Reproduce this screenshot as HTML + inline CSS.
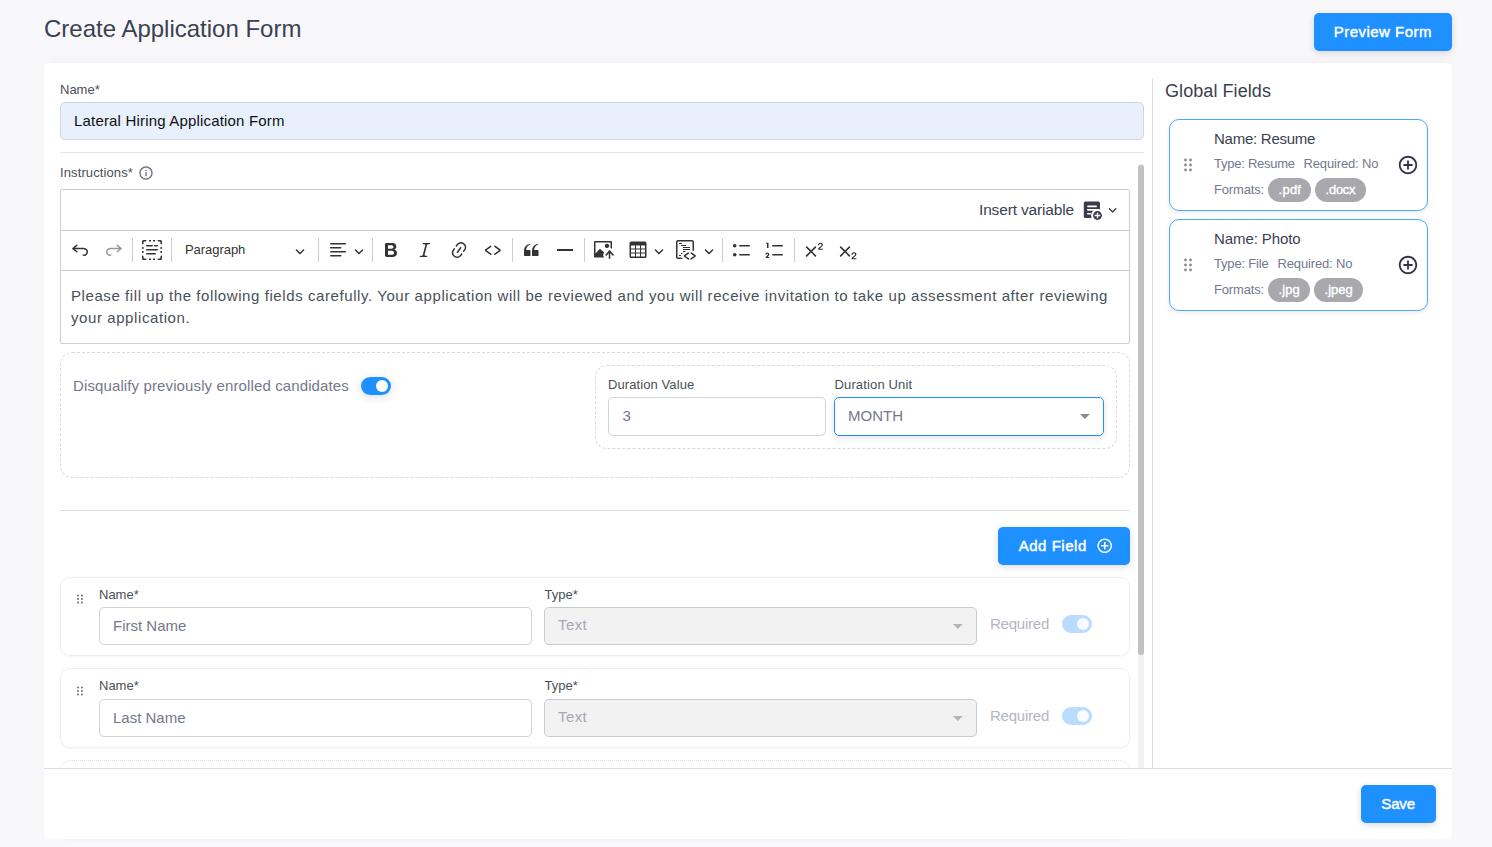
<!DOCTYPE html>
<html lang="en">
<head>
<meta charset="utf-8">
<title>Create Application Form</title>
<style>
*{box-sizing:border-box;margin:0;padding:0}
html,body{width:1492px;height:847px;overflow:hidden}
body{background:#f8f8fb;font-family:"Liberation Sans",sans-serif;position:relative;color:#495057}
.abs{position:absolute}
/* text positioned by left (--x), baseline (--b) and font-size (--fs) */
.t{position:absolute;white-space:nowrap;line-height:1;left:calc(var(--x)*1px);top:calc(var(--b)*1px - var(--fs)*0.8465px);font-size:calc(var(--fs)*1px);letter-spacing:calc(var(--ls,0)*1px)}
.card{left:44px;top:63px;width:1408px;height:776px;background:#fff;border-radius:5px;box-shadow:0 -6px 10px -4px rgba(18,38,63,.035)}
.btn{background:#1e90ff;border-radius:5px;box-shadow:0 2px 6px rgba(40,40,60,.17)}
.sb{-webkit-text-stroke:0.45px currentColor}
.inp{background:#fff;border:1px solid #ced4da;border-radius:5px}
.hr{height:1px;background:#e4e6ea}
.lbl{color:#495057}
.muted{color:#74788d}
.dash{border:1px dashed #d9d9dd;border-radius:12px}
.dot{border:1px dotted #dedede;border-radius:10px;box-shadow:0 1px 3px rgba(0,0,0,.04)}
.sel-dis{background:#f2f2f2;border:1px solid #c9c9d0;border-radius:5px}
.tog{border-radius:9px}
.tog i{position:absolute;border-radius:50%;background:#fff}
.gcard{border:1px solid #4da6ff;border-radius:10px;background:#fff;box-shadow:0 2px 4px rgba(0,0,0,.08)}
.badge{background:#a8a8ad;border-radius:12px;height:24px}
.badge .t{color:#fff;-webkit-text-stroke:0.4px #fff}
svg{position:absolute;display:block;overflow:visible}
.ck{fill:#333}
.sep{width:1px;height:24px;top:238px;background:#ccced1}
</style>
</head>
<body>

<!-- page header -->
<h4 class="t" style="--x:44;--b:37;--fs:24;font-weight:400;color:#3b4152">Create Application Form</h4>
<div class="abs btn" style="left:1314px;top:13px;width:138px;height:38px"></div>
<span class="t sb" style="--x:1333.7;--b:37;--fs:15;--ls:0.48;color:#fff">Preview Form</span>

<!-- main card -->
<div class="abs card"></div>

<!-- name -->
<label class="t lbl" style="--x:60;--b:94;--fs:13">Name*</label>
<div class="abs inp" style="left:60px;top:102px;width:1084px;height:38px;background:#e8f0fe"></div>
<span class="t" style="--x:74;--b:126;--fs:15;--ls:0.18;color:#101010">Lateral Hiring Application Form</span>
<div class="abs hr" style="left:60px;top:152px;width:1084px"></div>

<!-- instructions -->
<label class="t lbl" style="--x:60;--b:177;--fs:13;--ls:0.11">Instructions*</label>
<svg style="left:137.8px;top:165.2px" width="16" height="16" viewBox="0 0 24 24" fill="#6c6e82"><path d="M12 2C6.486 2 2 6.486 2 12s4.486 10 10 10 10-4.486 10-10S17.514 2 12 2zm0 18c-4.411 0-8-3.589-8-8s3.589-8 8-8 8 3.589 8 8-3.589 8-8 8z"/><path d="M11 11h2v6h-2zm0-4h2v2h-2z"/></svg>

<!-- editor -->
<div class="abs" style="left:60px;top:189px;width:1070px;height:155px;border:1px solid #ccced1;border-radius:2px;background:#fff"></div>
<div class="abs" style="left:60px;top:230px;width:1070px;height:1px;background:#ccced1"></div>
<div class="abs" style="left:60px;top:270px;width:1070px;height:1px;background:#ccced1"></div>

<!-- insert variable -->
<span class="t" style="--x:979;--b:215.4;--fs:15.5;--ls:-0.16;color:#3b4152">Insert variable</span>
<svg style="left:1082px;top:200px" width="20" height="20" viewBox="0 0 20 20"><rect x="1.800" y="1.600" width="16.200" height="16.400" rx="1.600" fill="#3a3a4a"/><path stroke="#fff" stroke-width="1.600" stroke-linecap="round" d="M5.850 6.350h8.400M5.750 9.850h11M5.750 13.700h2.600"/><circle cx="15.500" cy="15.500" r="6.500" fill="#fff"/><circle cx="15.500" cy="15.500" r="4.400" fill="#3a3a4a"/><path stroke="#fff" stroke-width="1.300" d="M15.500 12.700v5.600M12.700 15.500h5.600"/></svg>
<svg style="left:1107.5px;top:205px" width="9.2" height="9.2" viewBox="0 0 10 10" fill="#3a3a4a"><path d="M.941 4.523a.75.75 0 1 1 1.060-1.060l3.006 3.005 3.005-3.005a.75.75 0 1 1 1.060 1.060l-3.549 3.550a.75.750 0 0 1-1.168-.136L.941 4.523z"/></svg>

<!-- toolbar -->
<svg class="ck" style="left:70px;top:240px" width="20" height="20" viewBox="0 0 20 20"><path d="m5.042 9.367 2.189 1.837a.75.75 0 0 1-.965 1.149l-3.788-3.180a.747.747 0 0 1-.210-.284.75.75 0 0 1 .170-.945L6.230 4.762a.75.75 0 1 1 .964 1.150L4.863 7.866h8.917A.75.75 0 0 1 14 7.900a4 4 0 1 1-1.477 7.718l.344-1.489a2.500 2.500 0 1 0 1.094-4.730l.008-.032H5.042z"/></svg>
<svg class="ck" style="left:104px;top:240px;opacity:.5" width="20" height="20" viewBox="0 0 20 20"><path d="m14.958 9.367-2.189 1.837a.75.75 0 0 0 .965 1.149l3.788-3.180a.747.747 0 0 0 .210-.284.75.75 0 0 0-.170-.945L13.770 4.762a.75.75 0 1 0-.964 1.150l2.331 1.955H6.220A.75.75 0 0 0 6 7.900a4 4 0 1 0 1.477 7.718l-.344-1.489A2.500 2.500 0 1 1 6.039 9.400l-.008-.032h8.927z"/></svg>
<div class="abs sep" style="left:132px"></div>
<svg class="ck" style="left:142px;top:240px" width="20" height="20" viewBox="0 0 20 20"><path d="M.75 15.500a.75.75 0 0 1 .75.75V18l.008.090A.500.500 0 0 0 2 18.500h1.750a.75.75 0 1 1 0 1.500H1.500l-.144-.007a1.500 1.500 0 0 1-1.350-1.349L0 18.500v-2.250a.75.75 0 0 1 .75-.75zm18.500 0a.75.75 0 0 1 .75.75v2.250l-.007.144a1.500 1.500 0 0 1-1.349 1.350L18.500 20h-2.250a.75.75 0 1 1 0-1.500H18a.500.500 0 0 0 .492-.410L18.500 18v-1.750a.75.75 0 0 1 .75-.75zm-10.450 3c.110 0 .200.090.200.200v1.100a.200.200 0 0 1-.200.200H7.200a.200.200 0 0 1-.200-.200v-1.100c0-.110.090-.200.200-.200h1.600zm4 0c.110 0 .200.090.200.200v1.100a.200.200 0 0 1-.200.200h-1.600a.200.200 0 0 1-.200-.200v-1.100c0-.110.090-.200.200-.200h1.600zm.450-5.500a.75.75 0 1 1 0 1.500h-8.500a.75.75 0 1 1 0-1.500h8.500zM1.300 11c.110 0 .200.090.200.200v1.600a.200.200 0 0 1-.200.200H.200a.200.200 0 0 1-.200-.200v-1.600c0-.110.090-.200.200-.200h1.100zm18.500 0c.110 0 .200.090.200.200v1.600a.200.200 0 0 1-.200.200h-1.100a.200.200 0 0 1-.200-.200v-1.600c0-.110.090-.200.200-.200h1.100zm-4.550-2a.75.75 0 1 1 0 1.500H4.750a.75.75 0 1 1 0-1.500h10.500zM1.300 7c.110 0 .200.090.200.200v1.600a.200.200 0 0 1-.200.200H.200a.200.200 0 0 1-.200-.200V7.200c0-.110.090-.200.200-.200h1.100zm18.500 0c.110 0 .200.090.200.200v1.600a.200.200 0 0 1-.200.200h-1.100a.200.200 0 0 1-.200-.200V7.200c0-.110.090-.200.200-.200h1.100zm-4.550-2a.75.75 0 1 1 0 1.500h-2.500a.75.75 0 1 1 0-1.500h2.500zm-5 0a.75.75 0 1 1 0 1.500h-5.500a.75.75 0 0 1 0-1.500h5.500zm-6.500-5a.75.75 0 0 1 0 1.500H2a.500.500 0 0 0-.492.410L1.500 2v1.750a.75.75 0 0 1-1.500 0V1.500l.007-.144A1.500 1.500 0 0 1 1.356.006L1.500 0h2.250zM18.500 0l.144.007a1.500 1.500 0 0 1 1.350 1.349L20 1.500v2.250a.75.75 0 1 1-1.500 0V2l-.008-.090A.500.500 0 0 0 18 1.500h-1.750a.75.75 0 1 1 0-1.500h2.250zM8.800 0c.110 0 .200.090.200.200v1.100a.200.200 0 0 1-.200.200H7.200a.200.200 0 0 1-.200-.200V.200c0-.110.090-.200.200-.200h1.600zm4 0c.110 0 .200.090.200.200v1.100a.200.200 0 0 1-.200.200h-1.600a.200.200 0 0 1-.200-.200V.200c0-.110.090-.200.200-.200h1.600z"/></svg>
<div class="abs sep" style="left:171px"></div>
<span class="t" style="--x:185;--b:254;--fs:13;--ls:-0.05;color:#333">Paragraph</span>
<svg class="ck" style="left:295px;top:246px" width="10" height="10" viewBox="0 0 10 10"><path d="M.941 4.523a.75.75 0 1 1 1.060-1.060l3.006 3.005 3.005-3.005a.75.75 0 1 1 1.060 1.060l-3.549 3.550a.75.750 0 0 1-1.168-.136L.941 4.523z"/></svg>
<div class="abs sep" style="left:318px"></div>
<svg class="ck" style="left:328px;top:240px" width="20" height="20" viewBox="0 0 20 20"><path d="M2 3.750c0 .414.336.75.75.75h14.500a.75.75 0 1 0 0-1.500H2.750a.75.75 0 0 0-.75.75zm0 8c0 .414.336.75.75.75h14.500a.75.75 0 1 0 0-1.500H2.750a.75.75 0 0 0-.75.75zm0 4c0 .414.336.75.75.75h9.929a.75.75 0 1 0 0-1.500H2.750a.75.75 0 0 0-.75.75zm0-8c0 .414.336.75.75.75h9.929a.75.75 0 1 0 0-1.500H2.750a.75.75 0 0 0-.75.75z"/></svg>
<svg class="ck" style="left:354px;top:246px" width="10" height="10" viewBox="0 0 10 10"><path d="M.941 4.523a.75.75 0 1 1 1.060-1.060l3.006 3.005 3.005-3.005a.75.75 0 1 1 1.060 1.060l-3.549 3.550a.75.750 0 0 1-1.168-.136L.941 4.523z"/></svg>
<div class="abs sep" style="left:372px"></div>
<svg class="ck" style="left:381px;top:240px" width="20" height="20" viewBox="0 0 20 20"><path d="M10.187 17H5.773c-.637 0-1.092-.138-1.364-.415-.273-.277-.409-.718-.409-1.323V4.738c0-.617.140-1.062.419-1.332.279-.270.730-.406 1.354-.406h4.680c.690 0 1.288.041 1.793.124.506.083.960.242 1.360.478.341.197.644.447.906.75a3.262 3.262 0 0 1 .808 2.162c0 1.401-.722 2.426-2.167 3.075C15.050 10.175 16 11.315 16 13.010a3.756 3.756 0 0 1-2.296 3.504 6.100 6.100 0 0 1-1.517.377c-.571.073-1.238.110-2 .110zm-.217-6.217H7v4.087h3.069c1.977 0 2.965-.690 2.965-2.072 0-.707-.256-1.220-.768-1.537-.512-.319-1.277-.478-2.296-.478zM7 5.130v3.619h2.606c.729 0 1.292-.067 1.690-.200a1.600 1.600 0 0 0 .910-.765c.165-.267.247-.566.247-.897 0-.707-.260-1.176-.778-1.409-.519-.232-1.310-.348-2.375-.348H7z"/></svg>
<svg class="ck" style="left:415px;top:240px" width="20" height="20" viewBox="0 0 20 20"><path d="m9.586 14.633.021.004c-.036.335.095.655.393.962.082.083.173.150.274.201h1.474a.600.600 0 1 1 0 1.200H5.304a.600.600 0 0 1 0-1.200h1.150c.474-.070.809-.182 1.005-.334.157-.122.291-.320.404-.597l2.416-9.550a1.053 1.053 0 0 0-.281-.823 1.120 1.120 0 0 0-.442-.296H8.150a.600.600 0 0 1 0-1.200h6.443a.600.600 0 1 1 0 1.200h-1.195c-.376.056-.650.155-.823.296-.215.175-.423.439-.623.790l-2.366 9.347z"/></svg>
<svg class="ck" style="left:449px;top:240px" width="20" height="20" viewBox="0 0 20 20"><path d="m11.077 15 .991-1.416a.75.75 0 1 1 1.229.860l-1.148 1.640a.748.748 0 0 1-.217.206 5.251 5.251 0 0 1-8.503-5.955.741.741 0 0 1 .120-.274l1.147-1.639a.75.75 0 1 1 1.228.860L4.933 10.700l.006.003a3.750 3.750 0 0 0 6.132 4.294l.006.004zm5.494-5.335a.748.748 0 0 1-.120.274l-1.147 1.639a.75.75 0 1 1-1.228-.860l.860-1.230a3.750 3.750 0 0 0-6.144-4.301l-.860 1.229a.75.75 0 0 1-1.229-.860l1.148-1.640a.748.748 0 0 1 .217-.206 5.251 5.251 0 0 1 8.503 5.955zm-4.563-2.532a.75.75 0 0 1 .184 1.045l-3.155 4.505a.75.75 0 1 1-1.229-.860l3.155-4.506a.75.75 0 0 1 1.045-.184z"/></svg>
<svg class="ck" style="left:483px;top:240px" width="20" height="20" viewBox="0 0 20 20"><path d="m12.500 5.700 5.200 3.900v1.300l-5.600 4c-.100.200-.300.200-.500.200-.300-.100-.600-.700-.600-1l.300-.400 4.700-3.500L11.500 7l-.200-.200c-.100-.300-.100-.600 0-.800.200-.200.500-.400.800-.400a.800.800 0 0 1 .400.100zm-5.200 0L2 9.600v1.300l5.600 4c.100.200.300.200.500.200.300-.100.700-.700.600-1 0-.100 0-.300-.200-.400l-5-3.500L8.200 7l.200-.200c.100-.300.100-.600 0-.800-.200-.200-.500-.400-.800-.400a.800.800 0 0 0-.300.100z"/></svg>
<div class="abs sep" style="left:512px"></div>
<svg class="ck" style="left:521px;top:240px" width="20" height="20" viewBox="0 0 20 20"><path d="M3 10.423a6.500 6.500 0 0 1 6.056-6.408l.038.670C6.448 5.423 5.354 7.663 5.220 10H9c.552 0 .500.432.500.986v4.511c0 .554-.448.503-1 .503h-5c-.552 0-.500-.449-.500-1.003v-4.574zm8 0a6.500 6.500 0 0 1 6.056-6.408l.038.670c-2.646.739-3.740 2.979-3.873 5.315H17c.552 0 .500.432.500.986v4.511c0 .554-.448.503-1 .503h-5c-.552 0-.500-.449-.500-1.003v-4.574z"/></svg>
<svg class="ck" style="left:555px;top:240px" width="20" height="20" viewBox="0 0 20 20"><path d="M2 9h16v2H2z"/></svg>
<div class="abs sep" style="left:584px"></div>
<svg class="ck" style="left:594px;top:240px" width="20" height="20" viewBox="0 0 20 20"><path d="M1.201 1C.538 1 0 1.470 0 2.100v14.363c0 .640.534 1.037 1.186 1.037h9.494a2.970 2.970 0 0 1-.414-.287 2.998 2.998 0 0 1-1.055-2.030 3.003 3.003 0 0 1 .693-2.185l.383-.455-.020.018-3.650-3.410a.695.695 0 0 0-.957-.034L1.500 13.600V2.500h15v5.535a2.970 2.970 0 0 1 1.412.932l.088.105V2.100c0-.630-.547-1.100-1.200-1.100H1.202Zm11.713 2.803a2.146 2.146 0 0 0-2.049 1.992 2.140 2.140 0 0 0 1.280 2.096 2.130 2.130 0 0 0 2.644-3.110 2.134 2.134 0 0 0-1.875-.978Z"/><path d="M15.522 19.100a.790.790 0 0 0 .790-.790v-5.373l2.059 2.455a.790.790 0 1 0 1.211-1.015l-3.352-3.995a.790.790 0 0 0-.995-.179.784.784 0 0 0-.299.221l-3.350 3.990a.790.790 0 1 0 1.210 1.017l1.936-2.306v5.185c0 .436.353.790.790.790Z"/></svg>
<svg class="ck" style="left:628px;top:240px" width="20" height="20" viewBox="0 0 20 20"><path d="M3 5.500v3h4v-3H3Zm0 4v3h4v-3H3Zm0 4v3h4v-3H3Zm5 3h4v-3H8v3Zm5 0h4v-3h-4v3Zm4-4v-3h-4v3h4Zm0-4v-3h-4v3h4Zm1.500 8A1.500 1.500 0 0 1 17 18H3a1.500 1.500 0 0 1-1.500-1.500V3c.222-.863 1.068-1.500 2-1.500h13c.932 0 1.778.637 2 1.500v13.500Zm-6.500-4v-3H8v3h4Zm0-4v-3H8v3h4Z"/></svg>
<svg class="ck" style="left:654px;top:246px" width="10" height="10" viewBox="0 0 10 10"><path d="M.941 4.523a.75.75 0 1 1 1.060-1.060l3.006 3.005 3.005-3.005a.75.75 0 1 1 1.060 1.060l-3.549 3.550a.75.750 0 0 1-1.168-.136L.941 4.523z"/></svg>
<svg class="ck" style="left:676px;top:240px" width="20" height="20" viewBox="0 0 20 20"><path d="M12.870 12.610a.75.75 0 0 1-.089.976l-.085.070-3.154 2.254 3.412 2.414a.75.75 0 0 1 .237.950l-.057.095a.75.75 0 0 1-.950.237l-.096-.058-4.272-3.022-.003-1.223 4.010-2.867a.75.75 0 0 1 1.047.174zm2.795-.231.095.057 4.011 2.867-.003 1.223-4.272 3.022-.095.058a.75.75 0 0 1-.880-.151l-.070-.086-.058-.095a.75.75 0 0 1 .150-.880l.087-.070 3.412-2.414-3.154-2.253-.085-.071a.75.75 0 0 1 .862-1.207zM16 0a2 2 0 0 1 2 2v9.354l-.663-.492-.837-.001V2a.500.500 0 0 0-.500-.500H2a.500.500 0 0 0-.500.500v15a.500.500 0 0 0 .500.500h3.118L7.156 19H2a2 2 0 0 1-2-2V2a2 2 0 0 1 2-2h14zM5.009 15l.003 1H3v-1h2.009zm2.188-2-1.471 1H5v-1h2.197zM10 11v.095L8.668 12H7v-1h3zm4-2v1H7V9h7zm0-2v1H7V7h7zm-4-2v1H5V5h5zM6 3v1H3V3h3z"/></svg>
<svg class="ck" style="left:704px;top:246px" width="10" height="10" viewBox="0 0 10 10"><path d="M.941 4.523a.75.75 0 1 1 1.060-1.060l3.006 3.005 3.005-3.005a.75.75 0 1 1 1.060 1.060l-3.549 3.550a.75.750 0 0 1-1.168-.136L.941 4.523z"/></svg>
<div class="abs sep" style="left:722px"></div>
<svg class="ck" style="left:732px;top:240px" width="20" height="20" viewBox="0 0 20 20"><path d="M7 5.750c0 .414.336.75.75.75h9.500a.75.75 0 1 0 0-1.500h-9.500a.75.75 0 0 0-.75.75zm-6 0C1 4.784 1.777 4 2.750 4c.966 0 1.750.777 1.750 1.750 0 .966-.777 1.750-1.750 1.750C1.784 7.500 1 6.723 1 5.750zm6 9c0 .414.336.75.75.75h9.500a.75.75 0 1 0 0-1.500h-9.500a.75.75 0 0 0-.75.75zm-6 0c0-.966.777-1.750 1.750-1.750.966 0 1.750.777 1.750 1.750 0 .966-.777 1.750-1.750 1.750-.966 0-1.750-.777-1.750-1.750z"/></svg>
<svg class="ck" style="left:765px;top:240px" width="20" height="20" viewBox="0 0 20 20"><path d="M7 5.750c0 .414.336.75.75.75h9.500a.75.75 0 1 0 0-1.500h-9.500a.75.75 0 0 0-.75.75zM3.500 3v5H2V3.700H1v-1h2.500V3zM.343 17.857l2.590-3.257H2.920a.600.600 0 1 0-1.040 0H.302a2 2 0 1 1 3.995 0h-.001c-.048.405-.160.734-.333.988-.175.254-.590.692-1.244 1.312H4.300v1h-4l.043-.043zM7 14.750a.75.75 0 0 1 .75-.75h9.500a.75.75 0 1 1 0 1.500h-9.500a.75.75 0 0 1-.75-.75z"/></svg>
<div class="abs sep" style="left:794px"></div>
<svg class="ck" style="left:804px;top:240px" width="20" height="20" viewBox="0 0 20 20"><path d="M15.677 8.678h2.549c.254 0 .447.050.580.152a.490.490 0 0 1 .201.413.540.540 0 0 1-.159.393c-.105.108-.266.162-.480.162h-3.594c-.245 0-.435-.066-.572-.197a.621.621 0 0 1-.205-.463c0-.114.044-.265.132-.453a1.620 1.620 0 0 1 .288-.444c.433-.436.824-.810 1.172-1.122.348-.312.597-.517.747-.615.267-.183.490-.368.667-.553.177-.185.312-.375.405-.570.093-.194.139-.384.139-.570a1.008 1.008 0 0 0-.554-.917 1.197 1.197 0 0 0-.560-.133c-.426 0-.761.182-1.005.546a2.332 2.332 0 0 0-.164.390 1.609 1.609 0 0 1-.258.488c-.096.114-.237.170-.423.170a.558.558 0 0 1-.405-.156.568.568 0 0 1-.161-.427c0-.218.050-.446.151-.683.101-.238.252-.453.452-.646s.454-.349.762-.467a2.998 2.998 0 0 1 1.081-.178c.498 0 .923.076 1.274.228a1.916 1.916 0 0 1 1.004 1.032 1.984 1.984 0 0 1-.156 1.794c-.200.320-.405.572-.613.754-.208.182-.558.468-1.048.857-.490.390-.826.691-1.008.906a2.703 2.703 0 0 0-.240.309zM7.030 10.349l3.818-3.819a.800.800 0 1 1 1.132 1.132L8.160 11.480l3.819 3.818a.800.800 0 1 1-1.132 1.132L7.030 12.610l-3.818 3.820a.800.800 0 1 1-1.132-1.132L5.900 11.480 2.080 7.662A.800.800 0 1 1 3.212 6.530l3.818 3.820z"/></svg>
<svg class="ck" style="left:838px;top:240px" width="20" height="20" viewBox="0 0 20 20"><path d="m7.030 10.349 3.818-3.819a.800.800 0 1 1 1.132 1.132L8.160 11.480l3.819 3.818a.800.800 0 1 1-1.132 1.132L7.030 12.610l-3.818 3.820a.800.800 0 1 1-1.132-1.132L5.900 11.480 2.080 7.662A.800.800 0 1 1 3.212 6.530l3.818 3.820zm8.147 7.829h2.549c.254 0 .447.050.580.152a.490.490 0 0 1 .201.413.540.540 0 0 1-.159.393c-.105.108-.266.162-.480.162h-3.594c-.245 0-.435-.066-.572-.197a.621.621 0 0 1-.205-.463c0-.114.044-.265.132-.453a1.620 1.620 0 0 1 .288-.444c.433-.436.824-.810 1.172-1.122.348-.312.597-.517.747-.615.267-.183.490-.368.667-.553.177-.185.312-.375.405-.570.093-.194.139-.384.139-.570a1.008 1.008 0 0 0-.554-.917 1.197 1.197 0 0 0-.560-.133c-.426 0-.761.182-1.005.546a2.332 2.332 0 0 0-.164.390 1.609 1.609 0 0 1-.258.488c-.096.114-.237.170-.423.170a.558.558 0 0 1-.405-.156.568.568 0 0 1-.161-.427c0-.218.050-.446.151-.683.101-.238.252-.453.452-.646s.454-.349.762-.467a2.998 2.998 0 0 1 1.081-.178c.498 0 .923.076 1.274.228a1.916 1.916 0 0 1 1.004 1.032 1.984 1.984 0 0 1-.156 1.794c-.200.320-.405.572-.613.754-.208.182-.558.468-1.048.857-.490.390-.826.691-1.008.906a2.703 2.703 0 0 0-.240.309z"/></svg>

<!-- editor content -->
<p class="t" style="--x:71;--b:301;--fs:15;--ls:0.584;color:#495057">Please fill up the following fields carefully. Your application will be reviewed and you will receive invitation to take up assessment after reviewing</p>
<p class="t" style="--x:71;--b:323;--fs:15;--ls:0.584;color:#495057">your application.</p>

<!-- disqualify -->
<div class="abs dash" style="left:60px;top:352px;width:1070px;height:126px"></div>
<span class="t muted" style="--x:73;--b:390.8;--fs:15;--ls:0.12">Disqualify previously enrolled candidates</span>
<div class="abs tog" style="left:361px;top:377px;width:30px;height:18px;background:#1e90ff;box-shadow:0 2px 7px 1px rgba(40,50,80,.14)"><i style="left:15px;top:3px;width:12px;height:12px"></i></div>
<div class="abs dash" style="left:595px;top:365px;width:522px;height:84px"></div>
<label class="t lbl" style="--x:608;--b:389.5;--fs:13;--ls:0.09">Duration Value</label>
<div class="abs inp" style="left:608px;top:397px;width:218px;height:39px"></div>
<span class="t muted" style="--x:622.5;--b:420.8;--fs:15">3</span>
<label class="t lbl" style="--x:834.5;--b:389.5;--fs:13;--ls:0.14">Duration Unit</label>
<div class="abs inp" style="left:834px;top:397px;width:270px;height:39px;border-color:#1e90ff;box-shadow:0 2px 6px rgba(40,50,80,.13)"></div>
<span class="t muted" style="--x:848;--b:420.8;--fs:15;--ls:0.04">MONTH</span>
<svg style="left:1079.600px;top:414px" width="9.800" height="5.100" viewBox="0 0 10 5"><path fill="#8a8894" d="M0 0h10L5 5z"/></svg>

<div class="abs hr" style="left:60px;top:510px;width:1070px;background:#dedede"></div>

<!-- add field -->
<div class="abs btn" style="left:998px;top:527px;width:132px;height:38px"></div>
<span class="t sb" style="--x:1018.7;--b:551;--fs:15;--ls:0.53;color:#fff">Add Field</span>
<svg style="left:1096.25px;top:537.25px" width="17.5" height="17.5" viewBox="0 0 24 24" fill="#fff"><path d="M13 7h-2v4H7v2h4v4h2v-4h4v-2h-4z"/><path d="M12 2C6.486 2 2 6.486 2 12s4.486 10 10 10 10-4.486 10-10S17.514 2 12 2zm0 18c-4.411 0-8-3.589-8-8s3.589-8 8-8 8 3.589 8 8-3.589 8-8 8z"/></svg>

<!-- field rows -->
<div class="abs" style="left:0;top:0px;width:0;height:0">
<div class="abs dot" style="left:60px;top:577px;width:1070px;height:78.5px"></div>
<svg style="left:76px;top:594px" width="8" height="10" viewBox="0 0 8 10" fill="#5c6072"><circle cx="2" cy="1.500" r="0.920"/><circle cx="5.900" cy="1.500" r="0.920"/><circle cx="2" cy="5" r="0.920"/><circle cx="5.900" cy="5" r="0.920"/><circle cx="2" cy="8.500" r="0.920"/><circle cx="5.900" cy="8.500" r="0.920"/></svg>
<label class="t lbl" style="--x:99;--b:599;--fs:13">Name*</label>
<div class="abs inp" style="left:99px;top:607px;width:433px;height:38px"></div>
<span class="t muted" style="--x:113;--b:631;--fs:15">First Name</span>
<label class="t lbl" style="--x:544.500;--b:599;--fs:13">Type*</label>
<div class="abs sel-dis" style="left:544px;top:607px;width:433px;height:38px"></div>
<span class="t" style="--x:558;--b:630;--fs:15;--ls:0.400;color:#a6a8b6">Text</span>
<svg style="left:952.700px;top:624px" width="9.700" height="5" viewBox="0 0 10 5"><path fill="#b4b2bc" d="M0 0h10L5 5z"/></svg>
<span class="t" style="--x:990;--b:629;--fs:15;--ls:-0.220;color:#b4b6c2">Required</span>
<div class="abs tog" style="left:1062px;top:615px;width:30px;height:18px;background:#badcff"><i style="left:15px;top:3px;width:12px;height:12px;background:#f8fbff"></i></div>
</div>
<div class="abs" style="left:0;top:91.5px;width:0;height:0">
<div class="abs dot" style="left:60px;top:576.5px;width:1070px;height:79.5px"></div>
<svg style="left:76px;top:594px" width="8" height="10" viewBox="0 0 8 10" fill="#5c6072"><circle cx="2" cy="1.500" r="0.920"/><circle cx="5.900" cy="1.500" r="0.920"/><circle cx="2" cy="5" r="0.920"/><circle cx="5.900" cy="5" r="0.920"/><circle cx="2" cy="8.500" r="0.920"/><circle cx="5.900" cy="8.500" r="0.920"/></svg>
<label class="t lbl" style="--x:99;--b:599;--fs:13">Name*</label>
<div class="abs inp" style="left:99px;top:607px;width:433px;height:38px"></div>
<span class="t muted" style="--x:113;--b:631;--fs:15">Last Name</span>
<label class="t lbl" style="--x:544.500;--b:599;--fs:13">Type*</label>
<div class="abs sel-dis" style="left:544px;top:607px;width:433px;height:38px"></div>
<span class="t" style="--x:558;--b:630;--fs:15;--ls:0.400;color:#a6a8b6">Text</span>
<svg style="left:952.700px;top:624px" width="9.700" height="5" viewBox="0 0 10 5"><path fill="#b4b2bc" d="M0 0h10L5 5z"/></svg>
<span class="t" style="--x:990;--b:629;--fs:15;--ls:-0.220;color:#b4b6c2">Required</span>
<div class="abs tog" style="left:1062px;top:615px;width:30px;height:18px;background:#badcff"><i style="left:15px;top:3px;width:12px;height:12px;background:#f8fbff"></i></div>
</div>
<div class="abs" style="left:0;top:183px;width:0;height:0">
<div class="abs dot" style="left:60px;top:577px;width:1070px;height:78.5px"></div>
<svg style="left:76px;top:594px" width="8" height="10" viewBox="0 0 8 10" fill="#5c6072"><circle cx="2" cy="1.500" r="0.920"/><circle cx="5.900" cy="1.500" r="0.920"/><circle cx="2" cy="5" r="0.920"/><circle cx="5.900" cy="5" r="0.920"/><circle cx="2" cy="8.500" r="0.920"/><circle cx="5.900" cy="8.500" r="0.920"/></svg>
<label class="t lbl" style="--x:99;--b:599;--fs:13">Name*</label>
<div class="abs inp" style="left:99px;top:607px;width:433px;height:38px"></div>
<span class="t muted" style="--x:113;--b:631;--fs:15">Email</span>
<label class="t lbl" style="--x:544.500;--b:599;--fs:13">Type*</label>
<div class="abs sel-dis" style="left:544px;top:607px;width:433px;height:38px"></div>
<span class="t" style="--x:558;--b:630;--fs:15;--ls:0.400;color:#a6a8b6">Text</span>
<svg style="left:952.700px;top:624px" width="9.700" height="5" viewBox="0 0 10 5"><path fill="#b4b2bc" d="M0 0h10L5 5z"/></svg>
<span class="t" style="--x:990;--b:629;--fs:15;--ls:-0.220;color:#b4b6c2">Required</span>
<div class="abs tog" style="left:1062px;top:615px;width:30px;height:18px;background:#badcff"><i style="left:15px;top:3px;width:12px;height:12px;background:#f8fbff"></i></div>
</div>

<!-- scrollbar -->
<div class="abs" style="left:1138px;top:164px;width:6px;height:604px;background:#f1f1f1"></div>
<div class="abs" style="left:1138px;top:165px;width:6px;height:490px;background:#c1c1c1;border-radius:3px"></div>

<!-- global fields -->
<h5 class="t" style="--x:1165;--b:97;--fs:18;--ls:0.070;font-weight:400;color:#3b4152">Global Fields</h5>
<div class="abs" style="left:0;top:0px;width:0;height:0">
<div class="abs gcard" style="left:1169px;top:119px;width:259px;height:92px"></div>
<svg style="left:1184px;top:158px" width="9" height="14" viewBox="0 0 9 14" fill="#8c8c8c"><circle cx="1.500" cy="2" r="1.450"/><circle cx="6.500" cy="2" r="1.450"/><circle cx="1.500" cy="7" r="1.450"/><circle cx="6.500" cy="7" r="1.450"/><circle cx="1.500" cy="12" r="1.450"/><circle cx="6.500" cy="12" r="1.450"/></svg>
<span class="t" style="--x:1214;--b:144;--fs:15;--ls:-0.250;color:#3b4152">Name: Resume</span>
<span class="t muted" style="--x:1214;--b:168;--fs:13;--ls:-0.250">Type: Resume</span>
<span class="t muted" style="--x:1303.5;--b:168;--fs:13;--ls:-0.150">Required: No</span>
<span class="t muted" style="--x:1214;--b:194;--fs:13;--ls:-0.170">Formats:</span>
<div class="abs badge" style="left:1268px;top:178px;width:43px"><span class="t" style="--x:10.6;--b:16;--fs:13;--ls:0.22">.pdf</span></div>
<div class="abs badge" style="left:1315px;top:178px;width:51px"><span class="t" style="--x:10.6;--b:16;--fs:13;--ls:-0.28">.docx</span></div>
<svg style="left:1397px;top:153.800px" width="22" height="22" viewBox="0 0 24 24" fill="#33334a"><path d="M13 7h-2v4H7v2h4v4h2v-4h4v-2h-4z"/><path d="M12 2C6.486 2 2 6.486 2 12s4.486 10 10 10 10-4.486 10-10S17.514 2 12 2zm0 18c-4.411 0-8-3.589-8-8s3.589-8 8-8 8 3.589 8 8-3.589 8-8 8z"/></svg>
</div>
<div class="abs" style="left:0;top:100px;width:0;height:0">
<div class="abs gcard" style="left:1169px;top:119px;width:259px;height:92px"></div>
<svg style="left:1184px;top:158px" width="9" height="14" viewBox="0 0 9 14" fill="#8c8c8c"><circle cx="1.500" cy="2" r="1.450"/><circle cx="6.500" cy="2" r="1.450"/><circle cx="1.500" cy="7" r="1.450"/><circle cx="6.500" cy="7" r="1.450"/><circle cx="1.500" cy="12" r="1.450"/><circle cx="6.500" cy="12" r="1.450"/></svg>
<span class="t" style="--x:1214;--b:144;--fs:15;--ls:-0.090;color:#3b4152">Name: Photo</span>
<span class="t muted" style="--x:1214;--b:168;--fs:13;--ls:-0.176">Type: File</span>
<span class="t muted" style="--x:1277.5;--b:168;--fs:13;--ls:-0.150">Required: No</span>
<span class="t muted" style="--x:1214;--b:194;--fs:13;--ls:-0.170">Formats:</span>
<div class="abs badge" style="left:1268px;top:178px;width:42px"><span class="t" style="--x:10.6;--b:16;--fs:13;--ls:0.05">.jpg</span></div>
<div class="abs badge" style="left:1314px;top:178px;width:49px"><span class="t" style="--x:10.6;--b:16;--fs:13;--ls:0.0">.jpeg</span></div>
<svg style="left:1397px;top:153.800px" width="22" height="22" viewBox="0 0 24 24" fill="#33334a"><path d="M13 7h-2v4H7v2h4v4h2v-4h4v-2h-4z"/><path d="M12 2C6.486 2 2 6.486 2 12s4.486 10 10 10 10-4.486 10-10S17.514 2 12 2zm0 18c-4.411 0-8-3.589-8-8s3.589-8 8-8 8 3.589 8 8-3.589 8-8 8z"/></svg>
</div>

<!-- footer -->
<div class="abs" style="left:44px;top:768px;width:1408px;height:71px;background:#fff;border-radius:0 0 5px 5px"></div>
<div class="abs" style="left:44px;top:768px;width:1408px;height:1px;background:#dcdcdc"></div>
<div class="abs btn" style="left:1361px;top:785px;width:75px;height:38px"></div>
<span class="t sb" style="--x:1381.3;--b:809;--fs:15;--ls:-0.15;color:#fff">Save</span>

<!-- vertical divider -->
<div class="abs" style="left:1152px;top:79px;width:1px;height:689px;background:#dcdcdc"></div>

</body>
</html>
